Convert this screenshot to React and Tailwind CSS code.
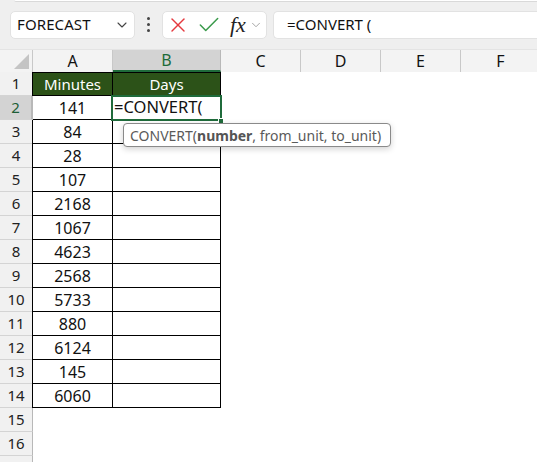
import { X, Check, ChevronDown } from 'lucide-react';

const minutos = [141, 84, 28, 107, 2168, 1067, 4623, 2568, 5733, 880, 6124, 145, 6060];
const columnas = [
	{ letra: 'C', ancho: 'w-[80px]' },
	{ letra: 'D', ancho: 'w-[80px]' },
	{ letra: 'E', ancho: 'w-[80px]' },
	{ letra: 'F', ancho: 'w-[80px]' },
];

function CabeceraFila({ n, activa, enTabla }) {
	return (
		<div
			className={`h-full shrink-0 flex items-center justify-center border-b border-[#d4d4d4] text-[15px] ${
				enTabla ? 'w-[32px]' : 'w-[33px] border-r border-r-[#b8b8b8]'
			} ${activa ? 'bg-[#d3d3d3] text-[#1d5e36] border-r-2 border-r-[#1f6b3b]' : 'bg-[#f1f1f1] text-[#222]'}`}
		>
			{n}
		</div>
	);
}

export default function App() {
	return (
		<div className="relative w-[537px] h-[462px] overflow-hidden bg-white font-['Noto_Sans',sans-serif] text-[#111]">
			{/* barra de formulas */}
			<div className="relative h-[49px] bg-[#efefef] flex items-center pl-[10px] gap-0">
				<div className="absolute left-[14px] right-0 top-0 h-[2px] bg-white border-b border-[#d9d9d9] rounded-bl-sm" />
				<div className="w-[125px] h-[28px] bg-white rounded-[5px] border border-[#e2e2e2] flex items-center justify-between pl-[6px] pr-[4px]">
					<span className="text-[15px] tracking-[0.1px]">FORECAST</span>
					<ChevronDown className="w-[16px] h-[16px] text-[#444]" strokeWidth={1.6} />
				</div>
				<div className="w-[27px] flex flex-col items-center gap-[3px]">
					<span className="w-[3px] h-[3px] bg-[#444] rounded-full" />
					<span className="w-[3px] h-[3px] bg-[#444] rounded-full" />
					<span className="w-[3px] h-[3px] bg-[#444] rounded-full" />
				</div>
				<div className="w-[105px] h-[28px] bg-white rounded-[5px] border border-[#e2e2e2] flex items-center pl-[3px]">
					<X className="w-[24px] h-[24px] text-[#e5393f]" strokeWidth={1.4} />
					<Check className="w-[26px] h-[26px] text-[#3a9a4b] ml-[6px]" strokeWidth={1.4} />
					<span className="ml-[8px] font-['Liberation_Serif',serif] italic text-[22px] leading-none text-[#222]">
						fx
					</span>
					<ChevronDown className="w-[14px] h-[14px] text-[#999] ml-[3px]" strokeWidth={1.5} />
				</div>
				<div className="ml-[6px] flex-1 h-[28px] bg-white rounded-l-[5px] border border-r-0 border-[#e2e2e2] flex items-center pl-[13px]">
					<span className="text-[15px]">=CONVERT (</span>
				</div>
			</div>

			{/* cabecera de columnas */}
			<div className="flex h-[23px] bg-[#f3f3f3] border-t border-[#e4e4e4]">
				<div className="w-[33px] shrink-0 relative border-r border-[#c8c8c8]">
					<div className="absolute right-[3px] bottom-[3px] w-0 h-0 border-l-[15px] border-l-transparent border-b-[15px] border-b-[#c4c4c4]" />
				</div>
				<div className="w-[80px] shrink-0 flex items-center justify-center text-[16px] border-r border-[#c8c8c8]">A</div>
				<div className="w-[108px] shrink-0 flex items-center justify-center text-[16px] bg-[#d3d3d3] text-[#1d6b3a] border-b-2 border-[#1f6b3b] border-r border-r-[#b8b8b8]">
					B
				</div>
				{columnas.map((c) => (
					<div
						key={c.letra}
						className={`${c.ancho} shrink-0 flex items-center justify-center text-[16px] border-r border-[#c8c8c8]`}
					>
						{c.letra}
					</div>
				))}
			</div>

			{/* fila 1: encabezados de tabla */}
			<div className="flex h-[24px]">
				<CabeceraFila n={1} enTabla />
				<div className="w-[81px] shrink-0 bg-[#2c5218] text-white text-[15px] flex items-center justify-center border border-black">
					Minutes
				</div>
				<div className="w-[108px] shrink-0 bg-[#2c5218] text-white text-[15px] flex items-center justify-center border-y border-r border-black">
					Days
				</div>
			</div>

			{minutos.map((m, i) => (
				<div key={i} className="flex h-[24px]">
					<CabeceraFila n={i + 2} activa={i === 0} enTabla={i !== 0} />
					<div
						className={`${i === 0 ? 'w-[80px]' : 'w-[81px] border-l'} shrink-0 text-[16px] flex items-center justify-center border-r border-b border-black`}
					>
						{m}
					</div>
					<div className="w-[108px] shrink-0 text-[16.5px] flex items-center border-r border-b border-black pl-[1px]">
						{i === 0 ? '=CONVERT(' : ''}
					</div>
				</div>
			))}

			{[15, 16, ''].map((n, i) => (
				<div key={i} className="flex h-[24px]">
					<CabeceraFila n={n} />
				</div>
			))}

			{/* celda activa B2 */}
			<div className="absolute left-[111px] top-[95px] w-[111px] h-[26px] border-2 border-[#1f6b3b] pointer-events-none" />
			<div className="absolute left-[218px] top-[118px] w-[6px] h-[6px] bg-[#1f6b3b] border border-white" />

			{/* ayuda de la funcion */}
			<div className="absolute left-[123px] top-[123px] w-[268px] h-[24px] bg-white border border-[#8a8a8a] rounded-[4px] shadow-[0_2px_6px_rgba(0,0,0,0.18)] flex items-center pl-[6px] text-[14px] text-[#5a5a5a] whitespace-nowrap">
				CONVERT(<b className="font-bold text-[#555]">number</b>, from_unit, to_unit)
			</div>
		</div>
	);
}
